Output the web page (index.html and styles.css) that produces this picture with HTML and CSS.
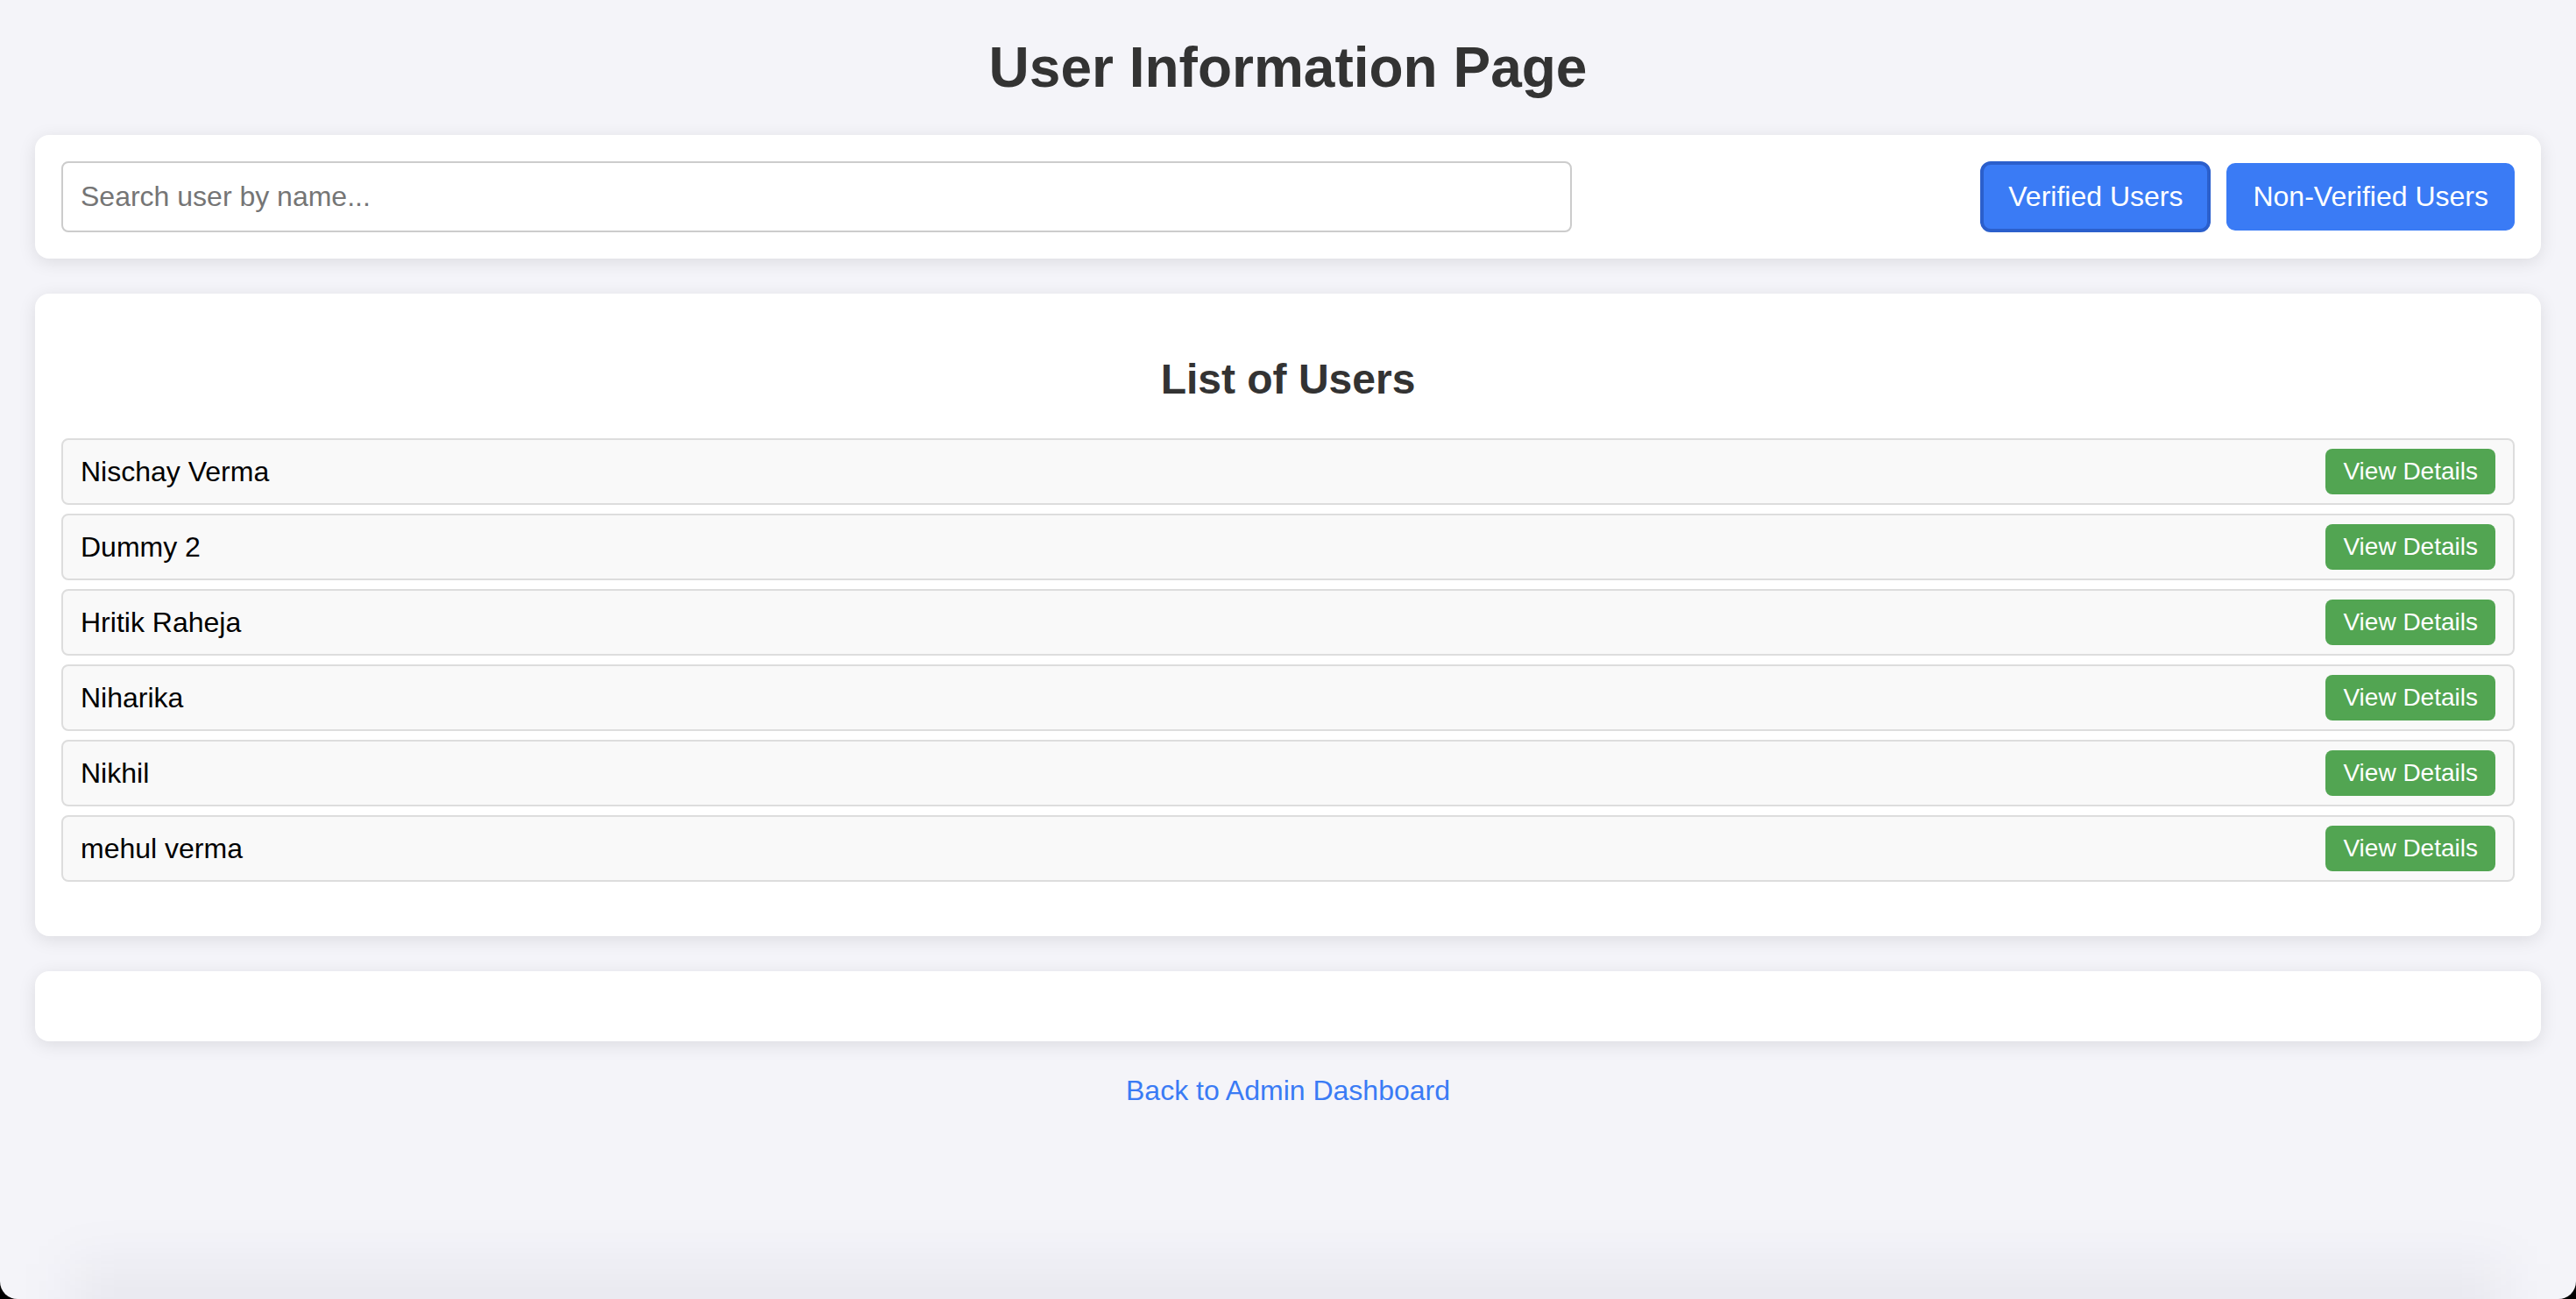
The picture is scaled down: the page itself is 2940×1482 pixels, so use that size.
FILE: index.html
```html
<!DOCTYPE html>
<html lang="en">
<head>
<meta charset="utf-8">
<title>User Information Page</title>
<link rel="stylesheet" href="styles.css">
</head>
<body>
  <h1 class="page-title">User Information Page</h1>

  <section class="card toolbar">
    <input class="search" type="text" placeholder="Search user by name...">
    <div class="filters">
      <button class="filter-btn active">Verified Users</button>
      <button class="filter-btn">Non-Verified Users</button>
    </div>
  </section>

  <section class="card">
    <h2 class="list-title">List of Users</h2>
    <ul class="user-list">
      <li class="user-row"><span class="user-name">Nischay Verma</span><button class="details-btn">View Details</button></li>
      <li class="user-row"><span class="user-name">Dummy 2</span><button class="details-btn">View Details</button></li>
      <li class="user-row"><span class="user-name">Hritik Raheja</span><button class="details-btn">View Details</button></li>
      <li class="user-row"><span class="user-name">Niharika</span><button class="details-btn">View Details</button></li>
      <li class="user-row"><span class="user-name">Nikhil</span><button class="details-btn">View Details</button></li>
      <li class="user-row"><span class="user-name">mehul verma</span><button class="details-btn">View Details</button></li>
    </ul>
  </section>

  <section class="card details-card">
    <div class="details-body"></div>
  </section>

  <div class="back">
    <a class="back-link" href="#">Back to Admin Dashboard</a>
  </div>

  <div class="window-shade"></div>
</body>
</html>
```

FILE: styles.css
```css
html {
  background: #000;
}

body {
  margin: 0;
  padding: 40px;
  height: 100vh;
  box-sizing: border-box;
  background: #f4f4f9;
  border-radius: 0 0 20px 20px;
  font-family: "Liberation Sans", Arial, Helvetica, sans-serif;
  color: #000;
  overflow: hidden;
}

.page-title {
  margin: 0 0 40px;
  text-align: center;
  font-size: 64px;
  font-weight: bold;
  color: #333;
}

.card {
  background: #fff;
  padding: 30px;
  border-radius: 16px;
  box-shadow: 0 4px 20px rgba(0, 0, 0, 0.1);
  margin-bottom: 40px;
}

.toolbar {
  display: flex;
  justify-content: space-between;
  align-items: center;
}

.search {
  width: 60%;
  padding: 20px;
  border: 2px solid #ccc;
  border-radius: 8px;
  font-size: 32px;
  font-family: inherit;
  color: #000;
  background: #fff;
  outline: none;
}

.search::placeholder {
  color: #757575;
}

.filters {
  display: flex;
  gap: 20px;
}

.filter-btn {
  padding: 20px 30px;
  font-size: 32px;
  font-family: inherit;
  background: #3a7bf5;
  color: #fff;
  border: none;
  border-radius: 10px;
  cursor: pointer;
}

.filter-btn.active {
  outline: 4px solid #2b5fcc;
  outline-offset: -2px;
}

.list-title {
  margin: 40px 0;
  text-align: center;
  font-size: 48px;
  font-weight: bold;
  color: #333;
}

.user-list {
  list-style: none;
  padding: 0;
  margin: 32px 0;
}

.user-row {
  display: flex;
  justify-content: space-between;
  align-items: center;
  margin: 10px 0;
  padding: 10px 20px;
  border: 2px solid #ddd;
  border-radius: 8px;
  background: #f9f9f9;
  font-size: 32px;
}

.details-btn {
  padding: 10px 20px;
  font-size: 28px;
  font-family: inherit;
  background: #52a552;
  color: #fff;
  border: none;
  border-radius: 8px;
  cursor: pointer;
}

.details-body {
  height: 20px;
}

.back {
  margin-top: -2px;
  text-align: center;
  font-size: 32px;
}

.back-link {
  color: #3a7bf5;
  text-decoration: none;
}

.window-shade {
  position: fixed;
  left: 80px;
  right: 80px;
  bottom: -50px;
  height: 90px;
  background: rgba(20, 20, 60, 0.05);
  filter: blur(30px);
  pointer-events: none;
}
```
